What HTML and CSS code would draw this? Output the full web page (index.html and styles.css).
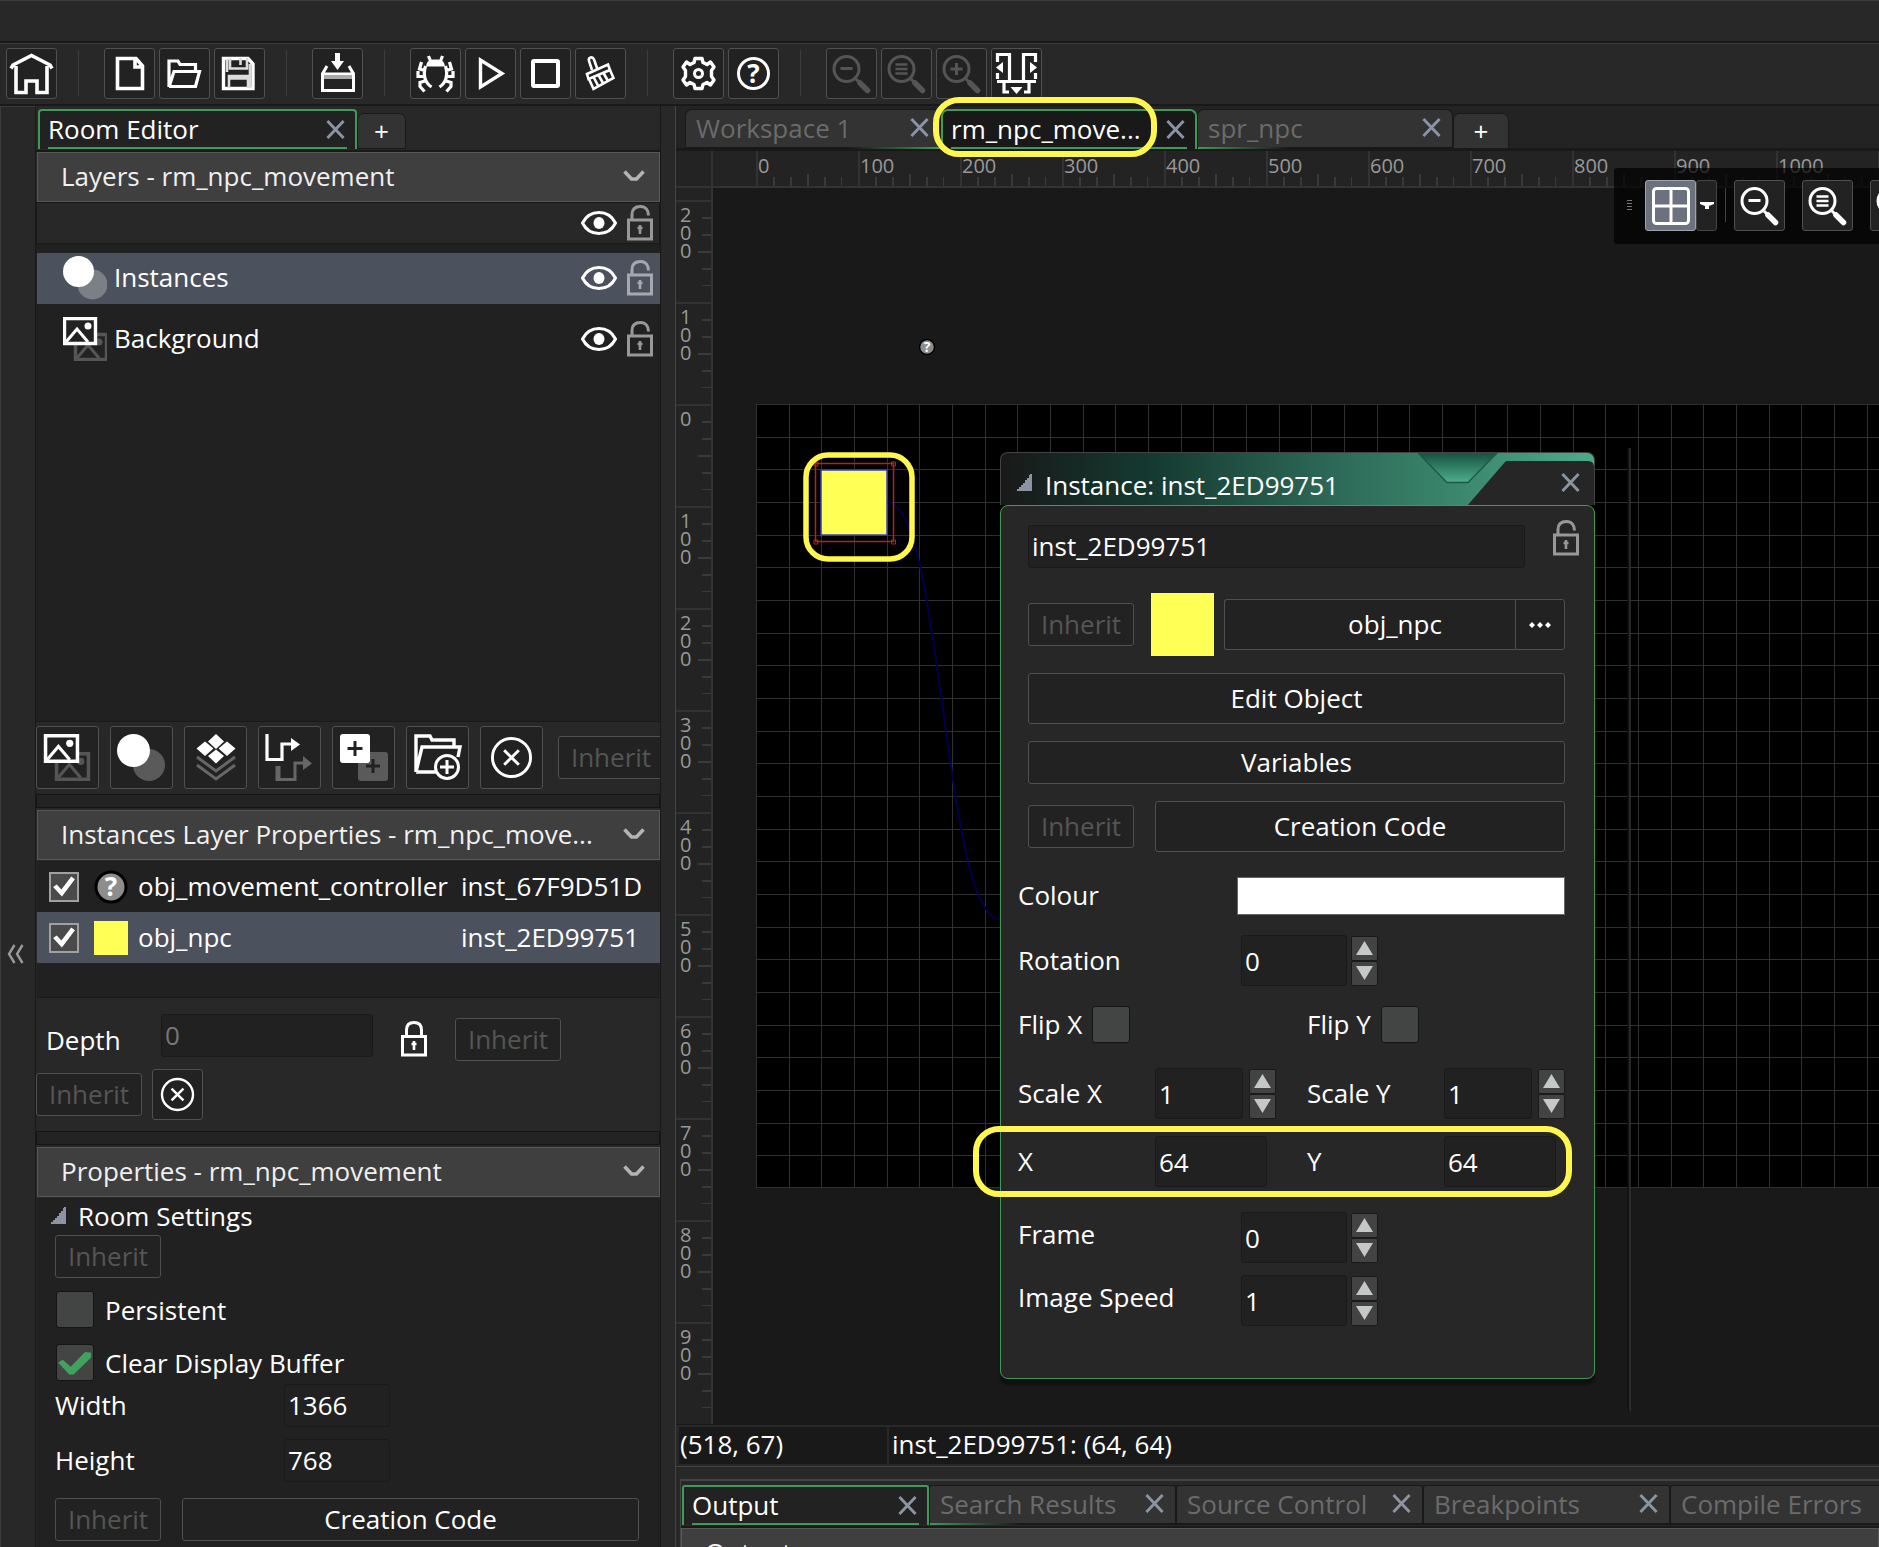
FILE: index.html
```html
<!DOCTYPE html>
<html lang="en">
<head>
<meta charset="utf-8">
<title>Room Editor</title>
<link rel="stylesheet" href="styles.css">
</head>
<body>
<svg class="sprites" aria-hidden="true">
  <symbol id="i-close" viewBox="0 0 20 20"><path d="M1.500 1 18.500 19M18.500 1 1.500 19" fill="none" stroke="currentColor" stroke-width="3"/></symbol>
  <symbol id="i-chev" viewBox="0 0 22 12"><path d="M1.500 1.500 8.500 9H13.500L20.500 1.500" fill="none" stroke="currentColor" stroke-width="3.600"/></symbol>
  <symbol id="i-eye" viewBox="0 0 36 26"><path d="M1.500 13C5 6 11 2.500 18 2.500S31 6 34.500 13C31 20 25 23.500 18 23.500S5 20 1.500 13Z" fill="none" stroke="currentColor" stroke-width="3"/><ellipse cx="18" cy="13" rx="5.500" ry="6" fill="currentColor"/></symbol>
  <symbol id="i-unlock" viewBox="0 0 26 36"><path d="M1.500 15H24.500V34H1.500ZM5 15V9.500C5 4 8.500 1.500 13.500 1.500S21.500 5 21.500 10.500" fill="none" stroke="currentColor" stroke-width="3"/><path d="M13 20v9M10.500 23h5" stroke="currentColor" stroke-width="2.600"/></symbol>
  <symbol id="i-lock" viewBox="0 0 26 36"><path d="M1.500 15.500H24.500V34H1.500ZM5.500 15V9C5.500 4 8.500 1.500 13 1.500S20.500 4 20.500 9V15" fill="none" stroke="currentColor" stroke-width="3"/><path d="M13 20v9M10.500 23h5" stroke="currentColor" stroke-width="2.600"/></symbol>
  <symbol id="i-circlex" viewBox="0 0 44 44"><circle cx="22" cy="22" r="19.500" fill="none" stroke="currentColor" stroke-width="3"/><path d="M14.500 14.500 29.500 29.500M29.500 14.500 14.500 29.500" stroke="currentColor" stroke-width="3"/></symbol>
  <symbol id="i-picture" viewBox="0 0 34 28" overflow="visible"><path d="M1.500 1.500H32.500V26.500H1.500Z" fill="#222" stroke="currentColor" stroke-width="3.400"/><path d="M3 25 14 12 25 25" fill="none" stroke="currentColor" stroke-width="3"/><circle cx="25" cy="9" r="3.500" fill="currentColor"/></symbol>
  <symbol id="i-zoomout" viewBox="1 1 49 49"><circle cx="20.500" cy="21" r="12.500" fill="none" stroke="currentColor" stroke-width="3"/><path d="M14.500 20.500h12" stroke="currentColor" stroke-width="3"/><path d="M30 31 33 34" stroke="currentColor" stroke-width="3"/><path d="M34 35 41.500 42.500" stroke="currentColor" stroke-width="5.500" stroke-linecap="round"/></symbol>
  <symbol id="i-zoomreset" viewBox="1 1 49 49"><circle cx="20.500" cy="21" r="12.500" fill="none" stroke="currentColor" stroke-width="3"/><path d="M14.500 16.500h12M14.500 21h12M14.500 25.500h12" stroke="currentColor" stroke-width="2.600"/><path d="M30 31 33 34" stroke="currentColor" stroke-width="3"/><path d="M34 35 41.500 42.500" stroke="currentColor" stroke-width="5.500" stroke-linecap="round"/></symbol>
  <symbol id="i-zoomin" viewBox="1 1 49 49"><circle cx="20.500" cy="21" r="12.500" fill="none" stroke="currentColor" stroke-width="3"/><path d="M14.500 21h12M20.500 15v12" stroke="currentColor" stroke-width="3"/><path d="M30 31 33 34" stroke="currentColor" stroke-width="3"/><path d="M34 35 41.500 42.500" stroke="currentColor" stroke-width="5.500" stroke-linecap="round"/></symbol>
  <symbol id="i-fold" viewBox="0 0 15 17"><path d="M15 0V17H0V15H2V13H4V11H6V9H8V6H10V4H12V1H13V0Z" fill="#8b94a3"/></symbol>
</svg>

<div class="app">
  <div class="menubar"></div>
  <header class="toolbar">
    <button class="tool" aria-label="Home"><svg viewBox="1 1 49 49"><path d="M5 20.500 7 17 25.500 7.500 44 17 46 20.500M10 18V44.500H20V33H31V44.500H41V18" fill="none" stroke="#fff" stroke-width="3.600"/></svg></button>
    <span class="sep"></span>
    <button class="tool" aria-label="New"><svg viewBox="1 1 49 49"><path d="M13.500 10.500H32L38.500 18V40.500H13.500ZM31 10V19H39" fill="none" stroke="#fff" stroke-width="3.600"/></svg></button>
    <button class="tool" aria-label="Open"><svg viewBox="1 1 49 49"><path d="M10 39V13H19L21 16.500H36.500V23M10 39 15 23.500H40.500L36.500 38.500H10" fill="none" stroke="#fff" stroke-width="3.200"/></svg></button>
    <button class="tool" aria-label="Save"><svg viewBox="1 1 49 49"><path d="M9.500 10.500H34L39 16V40.500H9.500Z" fill="none" stroke="#fff" stroke-width="3.400"/><path d="M16 10V20.500H33V10M26.500 10v7M15 40V28H34V40M15 30.500H34M13 11V24M36 16V40" fill="none" stroke="#ddd" stroke-width="2.600"/></svg></button>
    <span class="sep"></span>
    <button class="tool" aria-label="Create executable"><svg viewBox="1 1 49 49"><path d="M25.500 5V14" stroke="#fff" stroke-width="5"/><path d="M19 13H32L25.500 22Z" fill="#fff"/><path d="M10.500 26H41.500V42.500H10.500ZM11 25 15 18M41 25 37 18" fill="none" stroke="#fff" stroke-width="3"/><path d="M12 29H40" stroke="#aaa" stroke-width="4"/></svg></button>
    <span class="sep"></span>
    <button class="tool" aria-label="Debug"><svg viewBox="1 1 49 49"><path d="M16 18.500C17 13 19 11.500 25.500 11.500S34 13 35 18.500Z" fill="#fff"/><path d="M20.500 13 18.500 8M30.500 13 32.500 8M15.500 18C13 27 14 34 21.500 39M35.500 18C38 27 37 34 29.500 39M14.500 22.500 9.500 21 11.500 14M36.500 22.500 41.500 21 39.500 14M14 28.500H8V23M37 28.500H43V23M15 33 10 34.500V38.500L14.500 43.500M36 33 41 34.500V38.500L36.500 43.500" fill="none" stroke="#fff" stroke-width="3.200"/></svg></button>
    <button class="tool" aria-label="Run"><svg viewBox="1 1 49 49"><path d="M15.500 12V39L37 25.500Z" fill="none" stroke="#fff" stroke-width="3.400"/></svg></button>
    <button class="tool" aria-label="Stop"><svg viewBox="1 1 49 49"><rect x="13" y="13" width="25" height="25" rx="1" fill="none" stroke="#fff" stroke-width="4"/></svg></button>
    <button class="tool" aria-label="Clean"><svg viewBox="1 1 49 49"><g fill="none" stroke="#fff" stroke-width="2.600"><path d="M17 22 14 13C13 9 17.500 8 19 11.500L22 20M12 26 33 16.500 35 22 13.500 31ZM14 31 18.500 41 38.500 30 35 22M18.500 29 23.500 38.500M23.500 27 28.500 36M28.500 25 33 33"/></g></svg></button>
    <span class="sep"></span>
    <button class="tool" aria-label="Settings"><svg viewBox="1 1 49 49"><path d="M22 10.500H29L30 14.500 34 16.500 37.500 14 41 19 38.500 22.500V28.500L41 32 37.500 37 34 34.500 30 36.500 29 40.500H22L21 36.500 17 34.500 13.500 37 10 32 12.500 28.500V22.500L10 19 13.500 14 17 16.500 21 14.500Z" fill="none" stroke="#fff" stroke-width="3.400" stroke-linejoin="round"/><circle cx="25.500" cy="25.500" r="4" fill="none" stroke="#fff" stroke-width="3"/></svg></button>
    <button class="tool" aria-label="Help"><svg viewBox="1 1 49 49"><circle cx="25.500" cy="25.500" r="15" fill="none" stroke="#fff" stroke-width="3"/><text x="25.500" y="35" class="glyph-q">?</text></svg></button>
    <span class="sep"></span>
    <button class="tool dim" aria-label="Zoom out"><svg><use href="#i-zoomout"/></svg></button>
    <button class="tool dim" aria-label="Reset zoom"><svg><use href="#i-zoomreset"/></svg></button>
    <button class="tool dim" aria-label="Zoom in"><svg><use href="#i-zoomin"/></svg></button>
    <button class="tool" aria-label="Dock layout"><svg viewBox="1 1 49 49"><path d="M6.500 14V6.500H18.500V33M6.500 25V31M44.500 14V6.500H32.500V33M44.500 25V31M6 33.500H45M13 34V44H18M38 34V44H33" fill="none" stroke="#fff" stroke-width="3.200"/><path d="M12 14V25L5 19.500ZM39 14V25L46 19.500ZM19.500 39H31.500L25.500 46Z" fill="#fff"/></svg></button>
  </header>

  <div class="workspace">
    <nav class="rail"><button class="collapse" aria-label="Collapse"><svg viewBox="0 0 17 20"><path d="M7.500 1 2 10 7.500 19M15.500 1 10 10 15.500 19" fill="none" stroke="#999" stroke-width="2.400"/></svg></button></nav>

    <aside class="side">
      <div class="tabs side-tabs">
        <div class="tab active"><span>Room Editor</span><button class="x" aria-label="Close"><svg><use href="#i-close"/></svg></button></div>
        <button class="tab-add">+</button>
      </div>
      <button class="section-head"><span>Layers - rm_npc_movement</span><svg><use href="#i-chev"/></svg></button>
      <div class="vis-row"><svg class="eye"><use href="#i-eye"/></svg><svg class="lock"><use href="#i-unlock"/></svg></div>
      <div class="layer-list">
        <div class="layer selected">
          <svg class="layer-icon" viewBox="0 0 44 44"><circle cx="29.500" cy="28.500" r="15" fill="#7b8087"/><circle cx="15.500" cy="15.500" r="15.500" fill="#fff"/></svg>
          <span class="name">Instances</span><svg class="eye"><use href="#i-eye"/></svg><svg class="lock"><use href="#i-unlock"/></svg>
        </div>
        <div class="layer">
          <svg class="layer-icon" viewBox="0 0 44 44"><use href="#i-picture" x="11" y="16" width="34" height="28" color="#555"/><use href="#i-picture" width="34" height="28"/></svg>
          <span class="name">Background</span><svg class="eye"><use href="#i-eye"/></svg><svg class="lock"><use href="#i-unlock"/></svg>
        </div>
      </div>
      <div class="layer-tools">
        <button aria-label="Background layer"><svg viewBox="0 0 61 61"><use href="#i-picture" x="18" y="25" width="35" height="29" color="#555"/><use href="#i-picture" x="7" y="7" width="35" height="29"/></svg></button>
        <button aria-label="Instance layer"><svg viewBox="0 0 61 61"><circle cx="38" cy="38" r="16" fill="#5a5a5a"/><circle cx="22.500" cy="23.500" r="16.500" fill="#fff"/></svg></button>
        <button aria-label="Tile layer"><svg viewBox="0 0 61 61"><path d="M31 7 39 14.500 31 22 23 14.500ZM20 14.500 28.500 21.500 20 29 11.500 21.500ZM42 14.500 50.500 21.500 42 29 33.500 21.500ZM31 22.500 39 29 31 36.500 23 29Z" fill="#fff"/><path d="M12 30 31 44 50 30M12 38 31 52 50 38" fill="none" stroke="#666" stroke-width="3"/></svg></button>
        <button aria-label="Path layer"><svg viewBox="0 0 61 61"><path d="M20 52.500V39M18 39V52.500H36V36H45" fill="none" stroke="#666" stroke-width="3"/><path d="M44 29 53 36.500 44 43Z" fill="#666"/><path d="M8 7V32.500H23V17H33" fill="none" stroke="#fff" stroke-width="3.200"/><path d="M32 11 41 17.500 32 24Z" fill="#fff"/></svg></button>
        <button aria-label="Asset layer"><svg viewBox="0 0 61 61"><rect x="25" y="25" width="30" height="29" rx="3" fill="#5a5a5a"/><path d="M40 32V46M33 39H47" stroke="#222" stroke-width="3"/><rect x="7" y="7" width="30" height="29" rx="3" fill="#fff"/><path d="M22 14V29M14.500 21.500H29.500" stroke="#222" stroke-width="3"/></svg></button>
        <button aria-label="New folder"><svg viewBox="0 0 61 61"><path d="M9 45V9H23L25 13H47V20M9 45 15 20H53L51 30M9 45H30" fill="none" stroke="#fff" stroke-width="3.400"/><circle cx="40" cy="40" r="11.500" fill="#222" stroke="#fff" stroke-width="3"/><path d="M40 33V47M33 40H47" stroke="#fff" stroke-width="3"/></svg></button>
        <button aria-label="Delete layer"><svg viewBox="0 0 61 61"><use href="#i-circlex" x="9" y="9" width="43" height="43"/></svg></button>
        <button class="btn inherit" disabled>Inherit</button>
      </div>
      <div class="divider"></div>
      <button class="section-head"><span>Instances Layer Properties - rm_npc_move...</span><svg><use href="#i-chev"/></svg></button>
      <div class="inst-list">
        <label class="inst"><input type="checkbox" checked><svg class="sprite" viewBox="0 0 34 34"><circle cx="17" cy="17" r="15" fill="#8d8d8d" stroke="#000" stroke-width="3"/><text x="17" y="26" class="glyph-q">?</text></svg><span class="obj">obj_movement_controller</span><span>inst_67F9D51D</span></label>
        <label class="inst selected"><input type="checkbox" checked><span class="sprite npc"></span><span class="obj">obj_npc</span><span>inst_2ED99751</span></label>
      </div>
      <div class="depth">
        <div class="depth-row">
          <label for="depth">Depth</label><input id="depth" class="field" value="0" disabled>
          <svg class="lock closed"><use href="#i-lock"/></svg><button class="btn inherit" disabled>Inherit</button>
        </div>
        <div class="depth-actions"><button class="btn inherit" disabled>Inherit</button><button class="tool" aria-label="Clear"><svg viewBox="0 0 49 49"><use href="#i-circlex" x="7" y="7" width="35" height="35"/></svg></button></div>
      </div>
      <div class="divider"></div>
      <button class="section-head"><span>Properties - rm_npc_movement</span><svg><use href="#i-chev"/></svg></button>
      <div class="settings">
        <div class="settings-title"><svg class="fold"><use href="#i-fold"/></svg><span>Room Settings</span></div>
        <button class="btn inherit" disabled>Inherit</button>
        <label class="check-row"><input type="checkbox" class="box"><span>Persistent</span></label>
        <label class="check-row second"><input type="checkbox" class="box" checked><span>Clear Display Buffer</span></label>
        <div class="size-row"><label for="rw">Width</label><input id="rw" class="field" value="1366"></div>
        <div class="size-row last"><label for="rh">Height</label><input id="rh" class="field" value="768"></div>
        <div class="code-row"><button class="btn inherit" disabled>Inherit</button><button class="btn grow">Creation Code</button></div>
      </div>
    </aside>

    <div class="splitter"></div>

    <main class="editor">
      <div class="tabs main-tabs">
        <div class="tab before"><span>Workspace 1</span><button class="x" aria-label="Close"><svg><use href="#i-close"/></svg></button></div>
        <div class="tab active"><span>rm_npc_move...</span><button class="x" aria-label="Close"><svg><use href="#i-close"/></svg></button><i class="mark mark-tab"></i></div>
        <div class="tab after"><span>spr_npc</span><button class="x" aria-label="Close"><svg><use href="#i-close"/></svg></button></div>
        <button class="tab-add">+</button>
      </div>

      <div class="room-view">
        <div class="corner"></div>
        <div class="ruler-h"><span>0</span><span>100</span><span>200</span><span>300</span><span>400</span><span>500</span><span>600</span><span>700</span><span>800</span><span>900</span><span>1000</span><span></span></div>
        <div class="ruler-v"><span><b>200</b></span><span><b>100</b></span><span><b>0</b></span><span><b>100</b></span><span><b>200</b></span><span><b>300</b></span><span><b>400</b></span><span><b>500</b></span><span><b>600</b></span><span><b>700</b></span><span><b>800</b></span><span><b>900</b></span></div>
        <div class="canvas">
          <svg class="room" width="100%" height="100%">
            <defs><pattern id="grid" width="98" height="98" patternUnits="userSpaceOnUse"><path d="M0 .5H98M0 33.500H98M0 65.500H98M.5 0V98M33.500 0V98M65.500 0V98" stroke="#303030"/></pattern></defs>
            <g transform="translate(43 216)">
              <rect width="1394" height="784" fill="#000"/>
              <rect width="1394" height="784" fill="url(#grid)"/>
              <path d="M0 783.500H1394" stroke="#303030"/>
              <path d="M131 98C187 98 187 515 244 515" fill="none" stroke="#00004a" stroke-width="2"/>
              <rect x="65" y="66" width="66" height="65" fill="#ffff55" stroke="#3c3cc0" stroke-width="1.500"/>
              <g fill="none" stroke="#b42222" stroke-width="1.500"><rect x="59.500" y="59.500" width="78" height="78"/><path d="M58 136h4v4h-4ZM135.500 136h4v4h-4ZM135.500 58h4v4h-4ZM58 58h4v4h-4Z" stroke-width="1"/></g>
              <rect x="50" y="51" width="106" height="104" rx="22" fill="none" stroke="#fff750" stroke-width="5.500"/>
              <circle cx="171" cy="-57" r="7.500" fill="#8d8d8d" stroke="#000" stroke-width="1.500"/><text x="171" y="-52" class="glyph-q small">?</text>
              <path d="M872.500 44V1007" stroke="#111" stroke-width="2"/><path d="M874 44V1007" stroke="#333" stroke-width="1.500"/>
            </g>
          </svg>

          <section class="dialog">
            <header class="dialog-title">
              <svg class="fold"><use href="#i-fold"/></svg><h2>Instance: inst_2ED99751</h2>
              <svg class="title-art" viewBox="0 0 176 53"><defs><linearGradient id="notch" x1="0" y1="0" x2="0" y2="1"><stop offset="0" stop-color="#17513f"/><stop offset="1" stop-color="#4cb08e"/></linearGradient></defs><path d="M0 0 29 29.500H50L79 0Z" fill="url(#notch)" stroke="#1f5a48" stroke-width="1.500"/><path d="M49 53 87 9Q88 8 90 8H170Q176 8 176 14V53Z" fill="#262626"/></svg>
              <button class="x" aria-label="Close"><svg><use href="#i-close"/></svg></button>
            </header>
            <div class="dialog-body">
              <div class="name-row"><input class="field" aria-label="Instance name" value="inst_2ED99751"><svg class="lock"><use href="#i-unlock"/></svg></div>
              <div class="object-row"><button class="btn inherit" disabled>Inherit</button><span class="preview"></span><div class="split"><button class="btn">obj_npc</button><button class="btn more" aria-label="More"><svg viewBox="0 0 22 6"><path d="M0 3 3 0 6 3 3 6ZM8 3 11 0 14 3 11 6ZM16 3 19 0 22 3 19 6Z" fill="#fff"/></svg></button></div></div>
              <button class="btn tall wide">Edit Object</button>
              <button class="btn wide">Variables</button>
              <div class="creation-row"><button class="btn inherit" disabled>Inherit</button><button class="btn tall grow">Creation Code</button></div>
              <div class="prop colour"><label for="col">Colour</label><input id="col" type="color" value="#ffffff"></div>
              <div class="prop rotation"><label for="rot">Rotation</label><input id="rot" class="field" value="0"><span class="spin"><button aria-label="Up"></button><button aria-label="Down"></button></span></div>
              <div class="pair flip"><div class="check"><label for="fx">Flip X</label><input id="fx" type="checkbox" class="box"></div><div class="check"><label for="fy">Flip Y</label><input id="fy" type="checkbox" class="box"></div></div>
              <div class="pair scale"><div class="half"><label for="sx">Scale X</label><input id="sx" class="field" value="1"><span class="spin"><button aria-label="Up"></button><button aria-label="Down"></button></span></div><div class="half"><label for="sy">Scale Y</label><input id="sy" class="field" value="1"><span class="spin"><button aria-label="Up"></button><button aria-label="Down"></button></span></div></div>
              <div class="pair position"><div class="half"><label for="px">X</label><input id="px" class="field" value="64"></div><div class="half"><label for="py">Y</label><input id="py" class="field" value="64"></div><i class="mark mark-row"></i></div>
              <div class="prop frame"><label for="fr">Frame</label><input id="fr" class="field" value="0"><span class="spin"><button aria-label="Up"></button><button aria-label="Down"></button></span></div>
              <div class="prop speed"><label for="sp">Image Speed</label><input id="sp" class="field" value="1"><span class="spin"><button aria-label="Up"></button><button aria-label="Down"></button></span></div>
            </div>
          </section>
        </div>

        <div class="float-tools">
          <span class="grip"></span>
          <button class="tool on" aria-label="Grid"><svg viewBox="1 1 49 49"><rect x="8.500" y="8.500" width="35" height="35" rx="3" fill="none" stroke="#fff" stroke-width="3"/><path d="M26 8V44M8 26H44" stroke="#fff" stroke-width="3"/></svg></button>
          <button class="drop" aria-label="Grid options"><svg viewBox="0 0 14 7"><path d="M0 0H14V2L9 4V7H5V4L0 2Z" fill="#fff"/></svg></button>
          <span class="float-sep"></span>
          <button class="tool" aria-label="Zoom out"><svg><use href="#i-zoomout"/></svg></button>
          <button class="tool" aria-label="Reset zoom"><svg><use href="#i-zoomreset"/></svg></button>
          <button class="tool" aria-label="Zoom in"><svg><use href="#i-zoomin"/></svg></button>
        </div>
      </div>

      <div class="status"><span class="coords">(518, 67)</span><span class="target">inst_2ED99751: (64, 64)</span></div>
      <div class="h-splitter"></div>
      <section class="dock">
        <div class="tabs dock-tabs">
          <div class="tab active"><span>Output</span><button class="x" aria-label="Close"><svg><use href="#i-close"/></svg></button></div>
          <div class="tab after"><span>Search Results</span><button class="x" aria-label="Close"><svg><use href="#i-close"/></svg></button></div>
          <div class="tab"><span>Source Control</span><button class="x" aria-label="Close"><svg><use href="#i-close"/></svg></button></div>
          <div class="tab"><span>Breakpoints</span><button class="x" aria-label="Close"><svg><use href="#i-close"/></svg></button></div>
          <div class="tab"><span>Compile Errors</span><button class="x" aria-label="Close"><svg><use href="#i-close"/></svg></button></div>
        </div>
        <button class="section-head"><span>Output</span></button>
      </section>
    </main>
  </div>
</div>
</body>
</html>
```
FILE: styles.css
```css
:root {
  --bg: #282828;
  --inset: #222;
  --line: #191919;
  --edge: #3c3c3c;
  --btn-edge: #505050;
  --green: #3f9a58;
  --steel: #8b94a3;
  --mark: #fff750;
}
* { box-sizing: border-box; }
body {
  margin: 0;
  background: var(--bg);
  color: #fff;
  font: 26px/34px "Open Sans", "Noto Sans", sans-serif;
}
button, input { font: inherit; color: inherit; margin: 0; }
button { padding: 0; background: none; border: 0; }
svg { display: block; flex: none; }
.sprites { position: absolute; width: 0; height: 0; }

.app { display: flex; flex-direction: column; height: 100vh; overflow: hidden; }
.menubar { flex: none; height: 43px; border-top: 1px solid var(--edge); border-bottom: 2px solid var(--line); }
.toolbar { flex: none; display: flex; align-items: center; gap: 4px; height: 63px; padding: 0 6px 2px; border-top: 1px solid var(--edge); border-bottom: 2px solid var(--line); }
.tool { flex: none; width: 51px; height: 51px; border: 1px solid var(--btn-edge); border-radius: 3px; background: var(--inset); }
.tool svg { width: 49px; height: 49px; }
.tool.dim { color: #555; }
.tool.on { background: #6b717e; border-color: #a0a4ab; }
.sep { width: 1px; height: 46px; margin: 0 21px 0 17px; background: #3c3c3c; }
.glyph-q { fill: #fff; font-size: 26px; font-weight: 700; text-anchor: middle; }
.glyph-q.small { font-size: 14px; }

.workspace { flex: 1; min-height: 0; display: flex; }
.rail { flex: none; width: 36px; display: flex; flex-direction: column; border-left: 1px solid var(--edge); border-top: 1px solid var(--edge); border-right: 1px solid var(--line); }
.collapse { margin: auto 0 auto 6px; padding-top: 253px; width: 17px; }
.collapse svg { width: 17px; height: 20px; }

/* tabs */
.tabs { flex: none; display: flex; padding-top: 3px; }
.tab { position: relative; flex: none; display: flex; align-items: center; justify-content: space-between; height: 40px; padding: 0 11px 2px 10px; background: #333; border: 1px solid var(--line); border-bottom: 2px solid var(--line); border-radius: 7px 7px 0 0; color: #6b6b6b; }
.tab.active { padding: 0 10px 2px 8px; background: var(--inset); border: 2px solid var(--green); border-bottom: 0; border-radius: 4px 4px 0 0; color: #fff; }
.tab.active::after { content: ""; position: absolute; left: 8px; right: 8px; bottom: 0; height: 2px; background: var(--green); }
.tab.before::after, .tab.after::after { content: ""; position: absolute; bottom: -2px; height: 2px; width: 90px; }
.tab.before::after { right: 0; background: linear-gradient(270deg, var(--green), transparent); }
.tab.after::after { left: 0; background: linear-gradient(90deg, var(--green), transparent); }
.tab span { white-space: nowrap; }
.x { flex: none; width: 19px; height: 19px; color: var(--steel); }
.x svg { width: 19px; height: 19px; }
.tab-add { width: 49px; height: 36px; margin-top: 4px; background: #333; border: 1px solid var(--line); border-radius: 7px 7px 0 0; line-height: 30px; }

/* side panel */
.side { flex: none; width: 625px; display: flex; flex-direction: column; border: 0 solid var(--line); border-right-width: 1px; overflow: hidden; }
.side-tabs { height: 46px; padding-left: 2px; border-bottom: 2px solid var(--line); }
.side-tabs .tab { width: 319px; }
.section-head { flex: none; display: flex; align-items: center; justify-content: space-between; height: 50px; padding: 0 14px 2px 23px; margin-left: 1px; background: #3f3f3f; border: 1px solid #585858; text-align: left; white-space: nowrap; color: #f0f0f0; }
.section-head svg { width: 22px; height: 12px; color: #b4b4b4; }
.vis-row { flex: none; display: flex; align-items: center; justify-content: flex-end; gap: 10px; height: 42px; padding-right: 6px; border: 1px solid var(--line); }
.eye { width: 36px; height: 26px; color: #fff; }
.lock { width: 26px; height: 36px; color: #989898; }
.layer-list { flex: 1; min-height: 0; display: flex; flex-direction: column; gap: 10px; padding: 9px 0 0 1px; background: #212121; border-bottom: 1px solid var(--line); }
.layer { flex: none; display: flex; align-items: center; gap: 10px; height: 51px; padding: 0 7px 1px 26px; }
.selected { background: #4c525d; }
.layer-icon { width: 44px; height: 44px; color: #fff; }
.name { flex: 1; margin-left: -3px; padding-bottom: 2px; }
.selected .lock { color: #a5a8ae; }

.btn { flex: none; height: 43px; padding: 0 0 2px; border: 1px solid var(--btn-edge); border-radius: 3px; background: var(--inset); }
.btn.tall { height: 51px; }
.btn.grow { flex: 1; }
.inherit { width: 106px; color: #555; }
.layer-tools { flex: none; display: flex; align-items: center; gap: 11px; padding: 4px 0 5px; overflow: hidden; }
.layer-tools button:not(.btn) { flex: none; width: 63px; height: 63px; border: 1px solid var(--btn-edge); border-radius: 3px; background: var(--inset); }
.layer-tools svg { width: 61px; height: 61px; }
.layer-tools .btn { margin-left: 4px; }
.divider { flex: none; height: 14px; margin-bottom: 2px; background: #232323; border: 1px solid #141414; }

.inst-list { flex: none; margin: 1px 0 0 1px; padding-bottom: 34px; background: #212121; border-bottom: 1px solid var(--line); }
.inst { display: flex; align-items: center; height: 51px; padding-left: 12px; white-space: nowrap; }
.inst input { flex: none; appearance: none; width: 30px; height: 30px; border: 2px solid #a0a0a0; background: #4a4a4a; }
.inst input:checked::before { content: ""; display: block; height: 26px; background: #fff; clip-path: polygon(8% 52%, 22% 42%, 40% 62%, 78% 12%, 92% 22%, 42% 88%); }
.sprite { flex: none; width: 34px; height: 34px; margin: 0 10px 0 15px; }
.npc, .preview { background: #ffff55; }
.obj { width: 323px; }
.inst span:not(.sprite) { padding-bottom: 1px; }

.depth { flex: none; display: flex; flex-direction: column; gap: 8px; padding: 16px 0 11px; }
.depth-row { display: flex; align-items: flex-end; height: 47px; }
.depth-row label { width: 115px; margin-left: 10px; padding-bottom: 4px; }
.field { flex: none; width: 106px; height: 43px; padding: 0 3px 2px; border: 1px solid #1a1a1a; border-radius: 3px; background: #212121; outline: 0; }
.depth-row .field { align-self: flex-start; width: 212px; color: #777; }
.lock.closed { margin: 0 28px 4px; color: #fff; }
.depth-actions { display: flex; align-items: center; gap: 10px; }

.settings { flex: none; display: flex; flex-direction: column; align-items: flex-start; margin: 1px 0 0 1px; padding: 0 21px 6px 18px; background: #212121; }
.settings-title { display: flex; align-items: center; gap: 12px; height: 37px; margin-left: -4px; padding-bottom: 2px; }
.check-row { display: flex; align-items: center; gap: 11px; margin: 13px 0 0 1px; }
.check-row.second { margin-top: 16px; }
.box { flex: none; appearance: none; width: 38px; height: 37px; border: 1px solid #141414; border-radius: 3px; background: #434544; }
.box:checked::before { content: ""; display: block; height: 35px; background: #3fa35b; clip-path: polygon(3% 50%, 16% 42%, 38% 62%, 78% 20%, 95% 22%, 95% 36%, 46% 84%, 34% 84%); }
.size-row { display: flex; align-items: center; margin-top: 3px; }
.size-row.last { margin-top: 12px; }
.size-row label { width: 229px; padding-bottom: 2px; }
.code-row { display: flex; align-self: stretch; gap: 21px; margin-top: 16px; }

.splitter { flex: none; width: 15px; border-right: 1px solid #444; }

/* editor */
.editor { flex: 1; min-width: 0; display: flex; flex-direction: column; }
.main-tabs { height: 45px; padding-left: 9px; background: #232323; border-bottom: 3px solid var(--line); }
.main-tabs .tab { width: 256px; }
.main-tabs .tab.active { background: #191919; border-radius: 7px 7px 0 0; }
.main-tabs .tab-add { width: 56px; }
.mark { position: absolute; z-index: 5; border: 6px solid var(--mark); border-radius: 26px; pointer-events: none; }
.mark-tab { left: -10px; right: 38px; top: -14px; bottom: -8px; }

.room-view { position: relative; flex: 1; min-height: 0; display: grid; grid-template: 37px minmax(0, 1fr) / 37px minmax(0, 1fr); }
.corner { background: #232323; border: 2px solid #333; border-width: 0 2px 2px 0; }
.ruler-h { display: flex; padding-left: 43px; background: #232323; border-bottom: 2px solid #333; overflow: hidden; }
.ruler-h span {
  flex: none; width: 102px; border-left: 2px solid #333;
  font-size: 20px; line-height: 29px; color: #999;
  background:
    linear-gradient(#3a3a3a, #3a3a3a) 49px 100% / 2px 12px no-repeat,
    repeating-linear-gradient(90deg, transparent 0 15px, #3a3a3a 15px 17px) 0 100% / 84px 9px no-repeat;
}
.ruler-v { padding-top: 12px; background: #232323; border-right: 2px solid #333; overflow: hidden; }
.ruler-v span {
  display: block; height: 102px; padding: 4px 0 0 4px; border-top: 2px solid #333;
  background:
    linear-gradient(#3a3a3a, #3a3a3a) 100% 49px / 13px 2px no-repeat,
    repeating-linear-gradient(transparent 0 15px, #3a3a3a 15px 17px) 100% 0 / 9px 84px no-repeat;
}
.ruler-v b { display: block; width: 12px; font-weight: 400; font-size: 20px; line-height: 18px; color: #999; overflow-wrap: anywhere; }
.canvas { position: relative; background: #191919; overflow: hidden; }
.room { position: absolute; inset: 0; }

.float-tools { position: absolute; top: 17px; left: 938px; right: 0; height: 76px; display: flex; align-items: center; padding: 0 0 2px 13px; background: rgba(0, 0, 0, .7); border-radius: 3px 0 0 3px; overflow: hidden; }
.grip { flex: none; width: 5px; height: 11px; margin-right: 13px; background: repeating-linear-gradient(#777 0 1px, transparent 1px 3px); }
.drop { flex: none; display: flex; align-items: center; justify-content: center; width: 21px; height: 51px; border: 1px solid #444; border-radius: 3px; background: var(--inset); }
.drop svg { width: 14px; height: 7px; }
.float-sep { flex: none; width: 1px; height: 34px; margin: 0 8px; background: #444; }
.float-tools .tool + .tool { margin-left: 17px; }

/* instance window */
.dialog { position: absolute; left: 287px; top: 264px; width: 595px; border-radius: 8px; box-shadow: 0 6px 2px rgba(0, 0, 0, .35); }
.dialog-title { position: relative; display: flex; align-items: center; height: 53px; padding: 7px 14px 0 16px; border: 1px solid #444; border-bottom: 0; border-radius: 8px 8px 0 0; background: linear-gradient(90deg, #191919, #14382f 24%, #2a6352 52%, #3e8e73 82%, #4cab8a); overflow: hidden; }
.dialog-title h2 { flex: 1; margin: 0 0 0 13px; padding-top: 4px; font: inherit; }
.fold { width: 15px; height: 17px; }
.title-art { position: absolute; right: 0; top: 0; width: 176px; height: 53px; }
.dialog-title .x { position: relative; }
.dialog-body { display: flex; flex-direction: column; padding: 19px 29px 52px 27px; background: #272727; border: 1px solid var(--green); border-radius: 8px; }
.name-row { display: flex; margin-right: -14px; height: 43px; }
.name-row .field { flex: 1; }
.name-row .lock { margin: -5px 0 0 28px; }
.object-row { display: flex; align-items: center; margin-top: 25px; }
.preview { width: 63px; height: 63px; margin: 0 10px 0 17px; }
.split { flex: 1; display: flex; }
.split .btn { flex: 1; height: 51px; padding-left: 50px; border-right: 0; border-radius: 3px 0 0 3px; }
.split .more { flex: none; display: flex; align-items: center; justify-content: center; width: 50px; padding: 0; border-right: 1px solid var(--btn-edge); border-radius: 0 3px 3px 0; }
.more svg { width: 22px; height: 6px; }
.wide { margin-top: 17px; }
.creation-row { display: flex; align-items: center; gap: 21px; margin-top: 17px; }
.prop, .pair { display: flex; align-items: center; margin-left: -10px; }
.prop label, .pair label { padding-bottom: 2px; white-space: nowrap; }
.prop label { width: 223px; }
.prop .field, .half .field { height: 51px; padding-bottom: 0; }
.spin { flex: none; display: flex; flex-direction: column; width: 27px; margin-left: 4px; }
.spin button { height: 25px; border: 1px solid #1a1a1a; border-radius: 2px; background: #434343; }
.spin button::before { content: ""; display: block; width: 17px; height: 14px; margin: 0 auto; background: #c4c8c6; clip-path: polygon(50% 0, 100% 100%, 0 100%); }
.spin button:last-child::before { clip-path: polygon(0 0, 100% 0, 50% 100%); }
.colour { margin-top: 25px; }
.colour label { width: 219px; }
.colour input { flex: 1; appearance: none; height: 38px; padding: 0; border: 1px solid #666; background: #fff; }
.colour input::-webkit-color-swatch-wrapper { padding: 0; }
.colour input::-webkit-color-swatch { border: 0; }
.rotation, .flip { margin-top: 20px; }
.scale, .frame { margin-top: 25px; }
.pair > div { flex: none; display: flex; align-items: center; width: 289px; }
.check label { margin-right: 10px; }
.half label { width: 137px; }
.half .field { width: 88px; }
.half .spin { margin-left: 6px; }
.position { position: relative; margin-top: 17px; }
.position .field { width: 112px; }
.mark-row { left: -45px; right: -7px; top: -10px; bottom: -10px; }
.speed { margin-top: 12px; }
.frame label, .speed label { padding-bottom: 8px; }

.status { flex: none; display: flex; gap: 2px; height: 43px; padding: 2px 0 2px 3px; border-top: 1px solid var(--line); border-bottom: 1px solid #444; line-height: 35px; }
.coords { width: 208px; padding-left: 1px; background: #191919; }
.target { flex: 1; padding-left: 3px; background: #191919; }
.h-splitter { flex: none; height: 12px; }
.dock { flex: none; height: 68px; display: flex; flex-direction: column; margin-left: 4px; border-top: 2px solid #444; border-left: 1px solid #444; overflow: hidden; }
.dock-tabs { height: 47px; padding: 4px 0 0 1px; border-bottom: 2px solid var(--line); }
.dock-tabs .tab { width: 247px; border-radius: 3px 3px 0 0; }
.dock .section-head { margin-left: 0; }
```
